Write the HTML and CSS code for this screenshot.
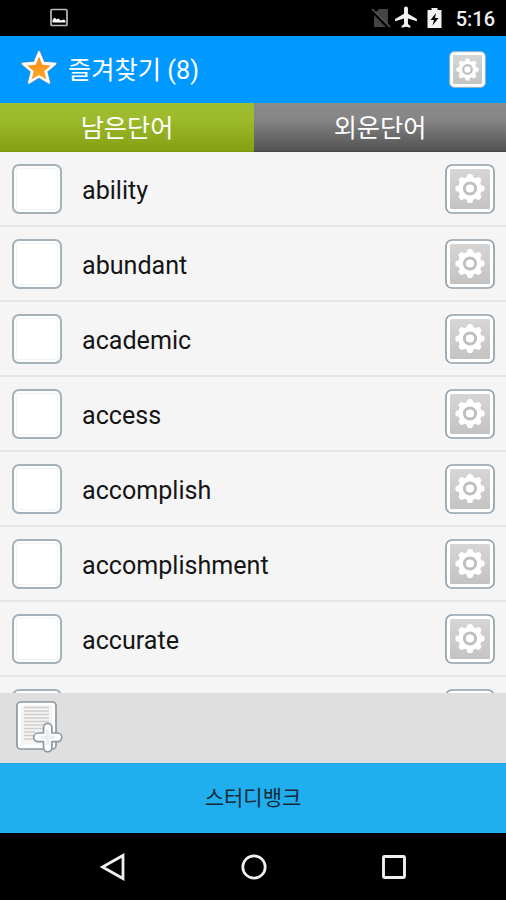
FILE: index.html
```html
<!DOCTYPE html>
<html lang="ko">
<head>
<meta charset="utf-8">
<title>즐겨찾기</title>
<link rel="stylesheet" href="styles.css">
</head>
<body>
<svg class="defs" aria-hidden="true">
  <defs>
    <linearGradient id="panel" x1="0" y1="0" x2="0" y2="1">
      <stop offset="0" stop-color="#d6d6d6"/><stop offset="1" stop-color="#c3c3c3"/>
    </linearGradient>
    <linearGradient id="orange" x1="0" y1="0" x2="0" y2="1">
      <stop offset="0" stop-color="#ff8a10"/><stop offset="1" stop-color="#ffa52b"/>
    </linearGradient>
    <symbol id="cog" viewBox="-15 -15 30 30">
      <g fill="#fff">
        <circle r="11.7"/>
        <g id="teeth"><rect x="-3" y="-14.6" width="6" height="29.2" rx="2.6"/><rect x="-14.6" y="-3" width="29.2" height="6" rx="2.6"/></g>
        <use href="#teeth" transform="rotate(45)"/>
      </g>
      <circle r="5.6" fill="none" stroke="#bfbfbf" stroke-width="3"/>
    </symbol>
    <symbol id="gear" viewBox="0 0 50 50">
      <rect x="1" y="1" width="48" height="48" rx="6" fill="#fff" stroke="#91a0aa" stroke-width="1.7"/>
      <rect x="5" y="5" width="40" height="40" rx="1.5" fill="url(#panel)"/>
      <use href="#cog" x="10" y="9.5" width="30" height="30"/>
    </symbol>
  </defs>
</svg>
<div class="screen">
  <div class="status">
    <svg class="status-photo" viewBox="0 0 20 20"><rect x="2" y="1.5" width="16" height="16" rx="1" fill="none" stroke="#bbb" stroke-width="1.7"/><path d="M3.5 14.5V12l2-2.500 2 2 2-1 2 2 3.500-1 1.500 1.500v1.500z" fill="#fff"/></svg>
    <div class="status-right">
      <svg class="status-sim" viewBox="0 0 20 22"><path d="M8 2h9v18H3V7z" fill="#444"/><path d="M0 3l18 18" stroke="#000" stroke-width="3"/><path d="M1 2l18 18" stroke="#555" stroke-width="1.6"/></svg>
      <svg class="status-plane" viewBox="0 0 22 22"><path d="M21 14v-2l-8.200-5V2.300a1.800 1.800 0 0 0-3.600 0V7L1 12v2l8.200-2.500v5L7 18.300V20l4-1 4 1v-1.700l-2.200-1.800v-5z" fill="#f2f2f2"/></svg>
      <svg class="status-battery" viewBox="0 0 16 22"><path d="M5 1h6v2h4v18H1V3h4z" fill="#f2f2f2"/><path d="M9.500 6L4 13h3.500L6 18.500 12 11H8.500z" fill="#000"/></svg>
      <span class="clock">5:16</span>
    </div>
  </div>
  <header class="header">
    <svg class="star" viewBox="0 0 38 38"><path class="star-edge" d="M19 3l4.400 10.700 12 1-9.200 7.600 2.900 11.400L19 27.600 8.900 33.700l2.900-11.400-9.200-7.600 12-1z"/><path class="star-rim" d="M19 3l4.400 10.700 12 1-9.200 7.600 2.900 11.400L19 27.600 8.900 33.700l2.900-11.400-9.200-7.600 12-1z"/><path d="M19 7.500l3.200 8.300 8.600.800-6.500 5.600 2.100 8.200L19 25.900 11.600 30.400l2.100-8.200L7.200 16.600l8.600-.800z" fill="url(#orange)"/></svg>
    <h1 class="title">즐겨찾기 (8)</h1>
    <svg class="settings" viewBox="0 0 37 37"><rect x=".7" y=".7" width="35.600" height="35.600" rx="4.500" fill="#fff" stroke="#a5b4c0" stroke-width="1"/><rect x="4" y="4" width="29" height="29" rx="1" fill="url(#panel)"/><use href="#cog" x="7" y="7" width="23" height="23"/></svg>
  </header>
  <nav class="tabs">
    <div class="tab tab-active">남은단어</div>
    <div class="tab">외운단어</div>
  </nav>
  <main class="list">
    <div class="row"><span class="check"></span><span class="word">ability</span><svg class="gear"><use href="#gear"/></svg></div>
    <div class="row"><span class="check"></span><span class="word">abundant</span><svg class="gear"><use href="#gear"/></svg></div>
    <div class="row"><span class="check"></span><span class="word">academic</span><svg class="gear"><use href="#gear"/></svg></div>
    <div class="row"><span class="check"></span><span class="word">access</span><svg class="gear"><use href="#gear"/></svg></div>
    <div class="row"><span class="check"></span><span class="word">accomplish</span><svg class="gear"><use href="#gear"/></svg></div>
    <div class="row"><span class="check"></span><span class="word">accomplishment</span><svg class="gear"><use href="#gear"/></svg></div>
    <div class="row"><span class="check"></span><span class="word">accurate</span><svg class="gear"><use href="#gear"/></svg></div>
    <div class="row"><span class="check"></span><span class="word"></span><svg class="gear"><use href="#gear"/></svg></div>
  </main>
  <div class="toolbar">
    <svg class="add" viewBox="0 0 50 54"><rect x="2" y="2" width="39" height="47" rx="3.500" fill="#fff" stroke="#8c98a4" stroke-width="1.700"/><rect x="6" y="5.500" width="31" height="39" fill="#f4f4f4"/><path d="M9 7.500h25M9 11h25M9 14.500h25M9 18h25M9 21.500h25M9 25h22M9 28.500h19M9 32h11M9 35.500h10M9 39h12" stroke="#cdcdcd" stroke-width="1.300"/><path d="M28.500 33v-5.500a4.200 4.200 0 0 1 8.400 0V33h5.600a4.300 4.300 0 0 1 0 8.600h-5.600v6a4.200 4.200 0 0 1-8.400 0v-6H23a4.300 4.300 0 0 1 0-8.600z" fill="#fff" stroke="#8c98a4" stroke-width="1.700" stroke-linejoin="round"/><path d="M32.700 30v15M25.500 37.300h14.500" stroke="#ececec" stroke-width="3"/></svg>
  </div>
  <div class="banner">스터디뱅크</div>
  <div class="navbar">
    <svg class="nav-icon" viewBox="0 0 30 30"><path d="M25 3.500v23L4.500 15z" fill="none" stroke="#f0f0f0" stroke-width="2.800"/></svg>
    <svg class="nav-icon" viewBox="0 0 30 30"><circle cx="15" cy="15" r="11.200" fill="none" stroke="#f0f0f0" stroke-width="2.700"/></svg>
    <svg class="nav-icon" viewBox="0 0 30 30"><rect x="4.500" y="4.500" width="21" height="21" rx="1" fill="none" stroke="#f0f0f0" stroke-width="2.900"/></svg>
  </div>
</div>
</body>
</html>
```
FILE: styles.css
```css
* { box-sizing: border-box; }
body { margin: 0; font-family: Roboto, "Noto Sans CJK KR", sans-serif; }
svg { display: block; flex: none; }
.defs { position: absolute; width: 0; height: 0; }
.screen { width: 506px; height: 900px; display: grid; grid-template-rows: 36px 67px 49px 541px 70px 70px 67px; overflow: hidden; background: #000; }
.status { display: flex; align-items: center; justify-content: space-between; padding: 0 11px 0 49px; }
.status-photo { width: 20px; height: 20px; }
.status-right { display: flex; align-items: center; }
.status-sim { width: 20px; height: 22px; }
.status-plane { width: 24px; height: 24px; margin-left: 3px; }
.status-battery { width: 17px; height: 22px; margin-left: 8px; }
.clock { margin-left: 13px; color: #eee; font-size: 20px; font-weight: 500; line-height: 24px; padding-top: 2px; }
.header { display: flex; align-items: center; padding: 0 20px; background: #0099ff; }
.star { width: 38px; height: 38px; margin-top: -3px; }
.star-edge { fill: #fff; stroke: #8293a0; stroke-width: 3; stroke-linejoin: round; }
.star-rim { fill: #fff; stroke: #fff; stroke-width: 1.8; stroke-linejoin: round; }
.title { margin: 0 auto 0 10px; padding-top: 2px; color: #fff; font-size: 25.300px; font-weight: 400; line-height: 36px; }
.settings { width: 37px; height: 37px; }
.tabs { display: grid; grid-template-columns: 254px 252px; }
.tab { display: flex; align-items: center; justify-content: center; padding-top: 4px; color: #fff; font-size: 25.200px; line-height: 36px; background: linear-gradient(#8b8b8b, #858585 35%, #525252); border-bottom: 1px solid #454545; }
.tab-active { background: linear-gradient(#9fbd32, #9dba2b 35%, #84a012); border-bottom-color: #7b970c; }
.list { overflow: hidden; background: #f5f5f5; }
.row { height: 75.07px; display: flex; align-items: center; padding: 0 11.500px 0 12px; border-bottom: 2px solid #e6e6e6; }
.check { width: 50px; height: 50px; border: 2px solid #a5b1b9; border-radius: 7px; background: #fff; box-shadow: inset 0 0 0 2px #fdfdfd, inset 0 0 0 3px #f1f4f5; }
.word { flex: 1; margin-left: 20px; padding-top: 5px; color: #151515; font-size: 25.100px; line-height: 30px; }
.gear { width: 50px; height: 50px; }
.toolbar { padding: 7px 15px; background: #dfdfdf; }
.add { width: 50px; height: 54px; }
.banner { display: flex; align-items: center; justify-content: center; background: #20aeef; color: #172b36; font-size: 21px; line-height: 30px; padding-bottom: 2px; border-top: 1px solid #19a4e6; }
.navbar { display: flex; justify-content: space-between; align-items: center; padding: 0 97px 0 98px; }
.nav-icon { width: 30px; height: 30px; }
```
